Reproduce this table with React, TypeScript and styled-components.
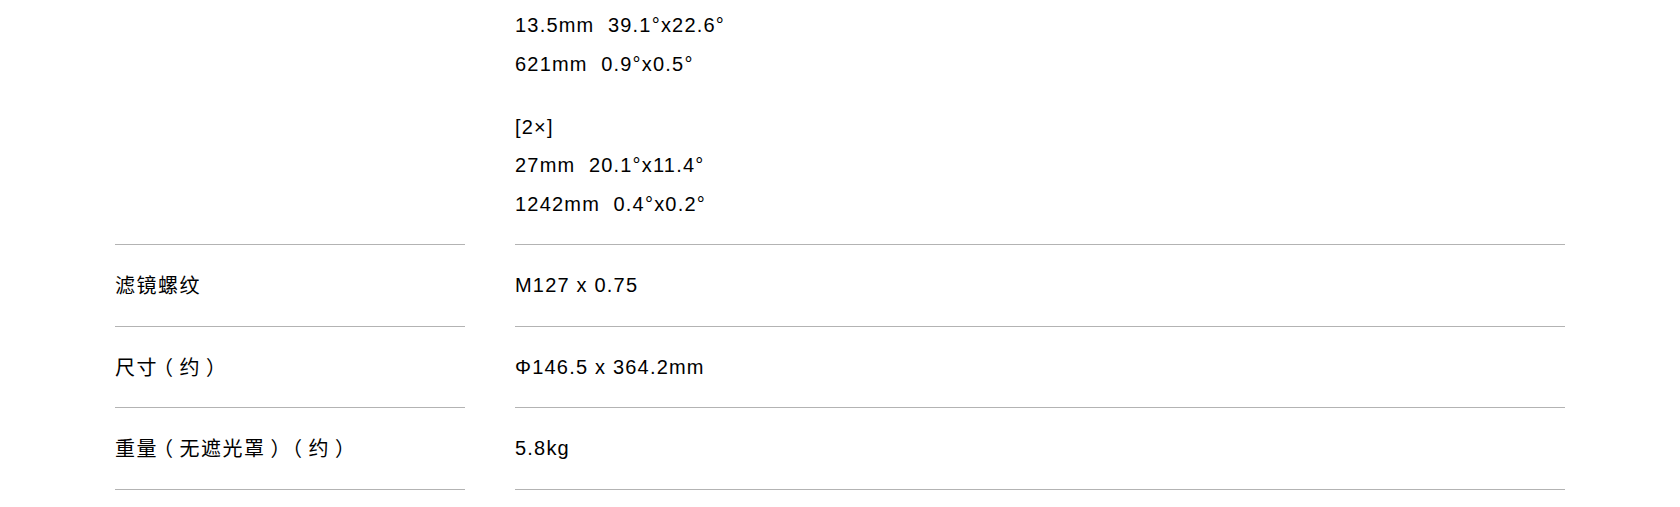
import React from 'react';
import styled, { createGlobalStyle } from 'styled-components';

const GlobalStyle = createGlobalStyle`
  html, body {
    margin: 0;
    padding: 0;
    background: #fff;
  }
  body {
    font-family: Arial, 'Liberation Sans', 'Noto Sans CJK SC', sans-serif;
    color: #000;
  }
`;

const SpecTable = styled.div`
  width: 1450px;
  margin: 0 auto;
`;

const SpecRow = styled.div`
  display: grid;
  grid-template-columns: 350px 1050px;
  column-gap: 50px;
`;

type CellProps = {
  $clipped?: boolean;
};

const Cell = styled.div<CellProps>`
  border-bottom: 1px solid #b3b3b3;
  padding: ${({ $clipped }) => ($clipped ? '6px 0 21px' : '21px 0 21px')};
  font-size: 20px;
  letter-spacing: 1.2px;
  line-height: 38.5px;
`;

const Label = styled(Cell)`
  font-family: 'Noto Sans CJK SC', sans-serif;
  letter-spacing: 1.5px;
`;

// full-width brackets sit centred in their box on the original page:
// take the half-width form and pad it back out to a full em
const Bracket = styled.span`
  font-feature-settings: 'halt' 1;
  padding: 0 0.25em;
`;

const Line = styled.div``;

const Group = styled.div`
  & + & {
    margin-top: 24.5px;
  }
`;

type Spec = {
  label: string;
  groups: string[][];
};

const specs: Spec[] = [
  { label: '滤镜螺纹', groups: [['M127 x 0.75']] },
  { label: '尺寸（约）', groups: [['Φ146.5 x 364.2mm']] },
  { label: '重量（无遮光罩）（约）', groups: [['5.8kg']] },
];

// the angle-of-view row is cut off by the top of the viewport
const viewGroups = [
  ['13.5mm\u00a0 39.1°x22.6°', '621mm\u00a0 0.9°x0.5°'],
  ['[2×]', '27mm\u00a0 20.1°x11.4°', '1242mm\u00a0 0.4°x0.2°'],
];

const LabelText: React.FC<{ text: string }> = ({ text }) => (
  <>
    {text
      .split(/([（）])/)
      .filter(Boolean)
      .map((part, i) =>
        part === '（' || part === '）' ? (
          <Bracket key={i}>{part}</Bracket>
        ) : (
          <span key={i}>{part}</span>
        )
      )}
  </>
);

const Values: React.FC<{ groups: string[][] }> = ({ groups }) => (
  <>
    {groups.map((group, gi) => (
      <Group key={gi}>
        {group.map((text, li) => (
          <Line key={li}>{text}</Line>
        ))}
      </Group>
    ))}
  </>
);

const App: React.FC = () => (
  <>
    <GlobalStyle />
    <SpecTable>
      <SpecRow>
        <Label $clipped />
        <Cell $clipped>
          <Values groups={viewGroups} />
        </Cell>
      </SpecRow>
      {specs.map((spec) => (
        <SpecRow key={spec.label}>
          <Label>
            <LabelText text={spec.label} />
          </Label>
          <Cell>
            <Values groups={spec.groups} />
          </Cell>
        </SpecRow>
      ))}
    </SpecTable>
  </>
);

export default App;
